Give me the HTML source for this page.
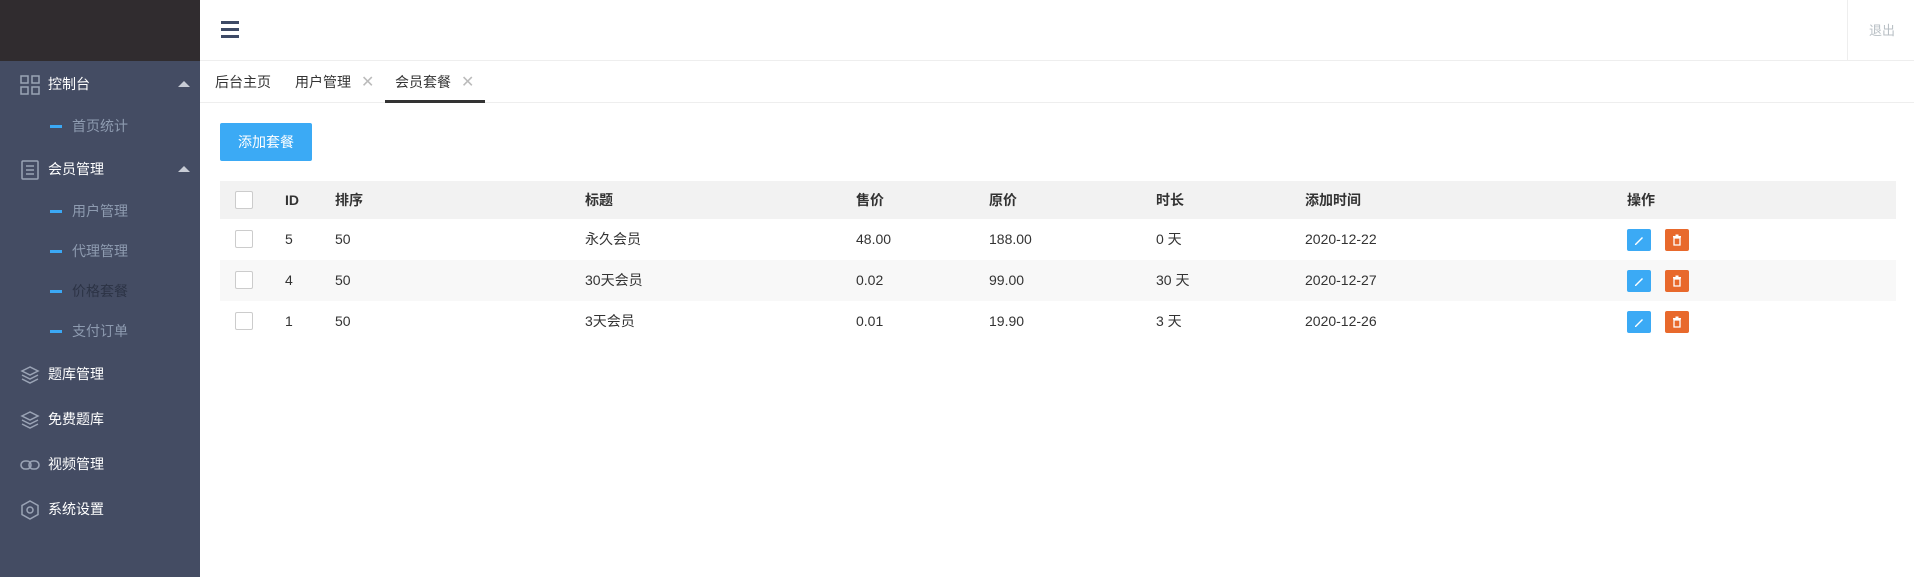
<!DOCTYPE html>
<html><head><meta charset="utf-8"><style>
*{margin:0;padding:0;box-sizing:border-box}
body{width:1914px;height:577px;overflow:hidden;font-family:"Liberation Sans","Noto Sans CJK SC",sans-serif;font-size:14px;color:#333;background:#fff;position:relative}
.side{position:absolute;left:0;top:0;width:200px;height:577px;background:#444c63}
.logo{height:61px;background:#302c2f}
.it{position:absolute;left:0;width:200px;height:20px;line-height:20px;color:#fff;font-size:14px}
.it .t{position:absolute;left:48px}
.it svg{position:absolute;left:20px;top:1px}
.arr{position:absolute;left:178px;top:7px;width:0;height:0;border-left:6px solid transparent;border-right:6px solid transparent;border-bottom:6px solid #c8ccd5}
.sub{position:absolute;left:0;width:200px;height:20px;line-height:20px;color:#8e9bb0;font-size:14px}
.sub .d{position:absolute;left:50px;top:9px;width:12px;height:3px;background:#3ba8f5}
.sub .t{position:absolute;left:72px}
.top{position:absolute;left:200px;top:0;right:0;height:61px;border-bottom:1px solid #eee}
.ham{position:absolute;left:21px;top:21px;width:18px}
.ham i{display:block;height:3px;background:#3d4a66;margin-bottom:4px}
.out{position:absolute;left:1847px;top:0;width:67px;height:61px;border-left:1px solid #eee;color:#b8bfc4;font-size:13px;line-height:62px;padding-left:21px}
.tabs{position:absolute;left:200px;top:61px;right:0;height:42px;border-bottom:1px solid #eee}
.tab{position:absolute;top:0;line-height:42px;font-size:14px;color:#333}
.x{color:#bbb;font-size:16px;margin-left:10px}
.btn{position:absolute;left:220px;top:123px;width:92px;height:38px;background:#3baaf5;color:#fff;line-height:38px;text-align:center;font-size:14px;border-radius:2px}
.tbl{position:absolute;left:220px;top:181px;width:1676px}
.row{position:relative;height:41px;line-height:41px;font-size:14px}
.hd{background:#f2f2f2;height:38px;line-height:38px;font-weight:bold}
.alt{background:#f8f8f8}
.row span{position:absolute;top:0}
.cb{position:absolute;left:15px;top:11px;width:18px;height:18px;border:1px solid #ccc;background:#fff;border-radius:2px}
.hd .cb{top:10px}
.b1,.b2{position:absolute;top:10px;width:24px;height:22px;border-radius:2px}
.b1{left:1407px;background:#3baaf5}
.b2{left:1445px;background:#e8692c}
.b1 svg,.b2 svg{position:absolute;left:6px;top:5px}
</style></head><body>
<div class="side"><div class="logo"></div>
<div class="it" style="top:74px"><svg width="20" height="20" viewBox="0 0 20 20" fill="none" stroke="#9aa3b5" stroke-width="1.5"><rect x="1" y="1" width="7" height="7"/><rect x="12" y="1" width="7" height="7"/><rect x="1" y="12" width="7" height="7"/><rect x="12" y="12" width="7" height="7"/></svg><span class="t">控制台</span><i class="arr"></i></div>
<div class="sub" style="top:116px"><i class="d"></i><span class="t">首页统计</span></div>
<div class="it" style="top:159px"><svg width="20" height="20" viewBox="0 0 20 20" fill="none" stroke="#9aa3b5" stroke-width="1.5"><rect x="2" y="1" width="16" height="18" rx="1"/><path d="M6 6h8M6 10h8M6 14h8"/></svg><span class="t">会员管理</span><i class="arr"></i></div>
<div class="sub" style="top:201px"><i class="d"></i><span class="t">用户管理</span></div>
<div class="sub" style="top:241px"><i class="d"></i><span class="t">代理管理</span></div>
<div class="sub" style="top:281px;color:#2c3345"><i class="d"></i><span class="t">价格套餐</span></div>
<div class="sub" style="top:321px"><i class="d"></i><span class="t">支付订单</span></div>
<div class="it" style="top:364px"><svg width="20" height="20" viewBox="0 0 20 20" fill="none" stroke="#9aa3b5" stroke-width="1.5"><path d="M10 2L2 6l8 4 8-4zM2 10l8 4 8-4M2 14l8 4 8-4"/></svg><span class="t">题库管理</span></div>
<div class="it" style="top:409px"><svg width="20" height="20" viewBox="0 0 20 20" fill="none" stroke="#9aa3b5" stroke-width="1.5"><path d="M10 2L2 6l8 4 8-4zM2 10l8 4 8-4M2 14l8 4 8-4"/></svg><span class="t">免费题库</span></div>
<div class="it" style="top:454px"><svg width="20" height="20" viewBox="0 0 20 20" fill="none" stroke="#9aa3b5" stroke-width="1.6"><rect x="1" y="6" width="10" height="8" rx="4"/><rect x="9" y="6" width="10" height="8" rx="4"/></svg><span class="t">视频管理</span></div>
<div class="it" style="top:499px"><svg width="20" height="20" viewBox="0 0 20 20" fill="none" stroke="#9aa3b5" stroke-width="1.5"><path d="M10 1l8 4.5v9L10 19l-8-4.5v-9z"/><circle cx="10" cy="10" r="3"/></svg><span class="t">系统设置</span></div>
</div>
<div class="top"><div class="ham"><i></i><i></i><i></i></div></div>
<div class="out">退出</div>
<div class="tabs">
<span class="tab" style="left:15px">后台主页</span>
<span class="tab" style="left:95px">用户管理<span class="x">✕</span></span>
<span class="tab" style="left:195px">会员套餐<span class="x">✕</span></span>
<div style="position:absolute;left:185px;top:39px;width:100px;height:3px;background:#333"></div>
</div>
<div class="btn">添加套餐</div>
<div class="tbl">
<div class="row hd"><i class="cb"></i><span style="left:65px">ID</span><span style="left:115px">排序</span><span style="left:365px">标题</span><span style="left:636px">售价</span><span style="left:769px">原价</span><span style="left:936px">时长</span><span style="left:1085px">添加时间</span><span style="left:1407px">操作</span></div>
<div class="row"><i class="cb"></i><span style="left:65px">5</span><span style="left:115px">50</span><span style="left:365px">永久会员</span><span style="left:636px">48.00</span><span style="left:769px">188.00</span><span style="left:936px">0 天</span><span style="left:1085px">2020-12-22</span><i class="b1"><svg width="12" height="12" viewBox="0 0 12 12"><path d="M2 10L9 3l1 1-7 7H2z" fill="#fff"/></svg></i><i class="b2"><svg width="12" height="12" viewBox="0 0 12 12" fill="#fff"><rect x="2" y="2" width="8" height="1.5"/><rect x="4.5" y="0.5" width="3" height="1.5"/><path d="M3 4h6v7H3z" fill="none" stroke="#fff" stroke-width="1.3"/></svg></i></div>
<div class="row alt"><i class="cb"></i><span style="left:65px">4</span><span style="left:115px">50</span><span style="left:365px">30天会员</span><span style="left:636px">0.02</span><span style="left:769px">99.00</span><span style="left:936px">30 天</span><span style="left:1085px">2020-12-27</span><i class="b1"><svg width="12" height="12" viewBox="0 0 12 12"><path d="M2 10L9 3l1 1-7 7H2z" fill="#fff"/></svg></i><i class="b2"><svg width="12" height="12" viewBox="0 0 12 12" fill="#fff"><rect x="2" y="2" width="8" height="1.5"/><rect x="4.5" y="0.5" width="3" height="1.5"/><path d="M3 4h6v7H3z" fill="none" stroke="#fff" stroke-width="1.3"/></svg></i></div>
<div class="row"><i class="cb"></i><span style="left:65px">1</span><span style="left:115px">50</span><span style="left:365px">3天会员</span><span style="left:636px">0.01</span><span style="left:769px">19.90</span><span style="left:936px">3 天</span><span style="left:1085px">2020-12-26</span><i class="b1"><svg width="12" height="12" viewBox="0 0 12 12"><path d="M2 10L9 3l1 1-7 7H2z" fill="#fff"/></svg></i><i class="b2"><svg width="12" height="12" viewBox="0 0 12 12" fill="#fff"><rect x="2" y="2" width="8" height="1.5"/><rect x="4.5" y="0.5" width="3" height="1.5"/><path d="M3 4h6v7H3z" fill="none" stroke="#fff" stroke-width="1.3"/></svg></i></div>
</div>
</body></html>
